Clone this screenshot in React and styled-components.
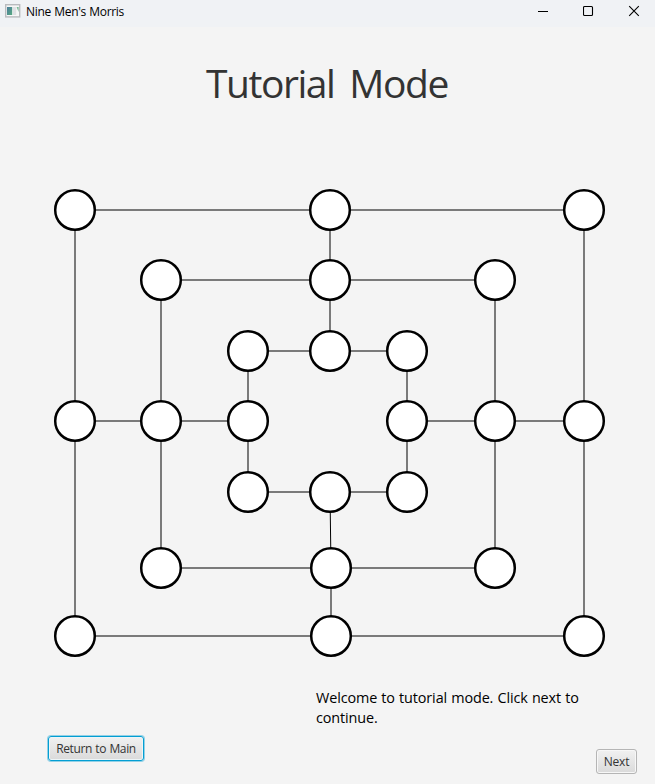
import React from "react";
import styled, { createGlobalStyle } from "styled-components";

const GlobalStyle = createGlobalStyle`
  * { box-sizing: border-box; }
  body { margin: 0; background: #f4f4f4; overflow: hidden; }
`;

const Window = styled.div`
  width: 655px;
  height: 784px;
  display: flex;
  flex-direction: column;
  background: #f4f4f4;
  font-family: "Open Sans", "Noto Sans", sans-serif;
`;

const TitleBar = styled.header`
  height: 27px;
  flex: none;
  display: flex;
  align-items: flex-start;
  background: #f0f2f5;
  color: #000;
`;

const AppIcon = styled.svg`
  flex: none;
  margin: 4px 5px 0 5px;
`;

const WindowTitle = styled.span`
  flex: 1;
  font-size: 12px;
  line-height: 16px;
  margin-top: 4px;
  letter-spacing: -0.32px;
  word-spacing: 0.6px;
`;

const WindowControls = styled.div`
  display: flex;
  gap: 34px;
  margin: 5px 15px 0 0;
`;

const Heading = styled.h1`
  margin: 28px 0 0 206px;
  height: 55px;
  line-height: 55px;
  font-size: 39px;
  font-weight: 400;
  letter-spacing: -1.45px;
  word-spacing: 6.2px;
  white-space: nowrap;
  color: #333;
`;

const Board = styled.svg`
  display: block;
  flex: none;
  margin: 70px 0 0 45px;
`;

const Link = styled.line`
  stroke: #000;
  stroke-width: 1;
`;

const Point = styled.circle`
  fill: #fff;
  stroke: #000;
  stroke-width: 2.5;
`;

const Footer = styled.footer`
  flex: 1;
  display: grid;
  grid-template-columns: 268px 280px 41px;
  padding-left: 48px;
  align-items: start;
`;

const Message = styled.p`
  margin: 22px 0 0;
  font-size: 14.4px;
  line-height: 20px;
  letter-spacing: -0.12px;
  word-spacing: 0.6px;
  white-space: nowrap;
  color: #000;
`;

const Button = styled.button`
  width: ${(p) => p.$width}px;
  height: 25px;
  margin-top: ${(p) => p.$top}px;
  padding: 1px 0 0;
  border: 1px solid ${(p) => (p.$focused ? "#039ed3" : "#b5b5b5")};
  border-radius: 3px;
  background: linear-gradient(#f1f1f1, #dadada);
  box-shadow: ${(p) =>
    p.$focused ? "0 0 0 1px #039ed366, inset 0 0 0 1px #eef5f7" : "inset 0 0 0 1px #f7f7f7"};
  font: 12px/16px "Open Sans", "Noto Sans", sans-serif;
  letter-spacing: ${(p) => p.$tracking}px;
  word-spacing: 0.5px;
  white-space: nowrap;
  color: #333;
`;

const points = [
  [75, 210], [330, 210], [584, 210],
  [161, 280], [330, 280], [495, 280],
  [248, 351], [330, 351], [407, 351],
  [75, 421], [161, 421], [248, 421],
  [407, 421], [495, 421], [584, 421],
  [248, 492], [330, 492], [407, 492],
  [161, 568], [331, 568], [495, 568],
  [75, 636], [331, 636], [584, 636],
];

const links = [
  [0, 1], [1, 2], [3, 4], [4, 5], [6, 7], [7, 8],
  [9, 10], [10, 11], [12, 13], [13, 14],
  [15, 16], [16, 17], [18, 19], [19, 20], [21, 22], [22, 23],
  [0, 9], [9, 21], [3, 10], [10, 18], [6, 11], [11, 15],
  [1, 4], [4, 7], [16, 19], [19, 22],
  [8, 12], [12, 17], [5, 13], [13, 20], [2, 14], [14, 23],
];

export default function App() {
  return (
    <Window>
      <GlobalStyle />
      <TitleBar>
        <AppIcon width="16" height="14" viewBox="0 0 16 14">
          <defs>
            <linearGradient id="pane" x1="0" y1="0" x2="1" y2="1">
              <stop offset="0" stopColor="#4b7d9b" />
              <stop offset="1" stopColor="#58a981" />
            </linearGradient>
          </defs>
          <rect x="0.7" y="0.7" width="14" height="12.2" fill="#f7f7f7" stroke="#b9bbbe" strokeWidth="1.4" />
          <rect x="2" y="3" width="5.2" height="8" fill="url(#pane)" />
          <rect x="8" y="3" width="3.2" height="8" fill="#dfe1e4" />
          <path d="M11.6 3h2v5z" fill="#78b795" />
        </AppIcon>
        <WindowTitle>Nine Men's Morris</WindowTitle>
        <WindowControls>
          <svg width="12" height="12" viewBox="0 0 12 12" shapeRendering="crispEdges">
            <path d="M1 6.5h10" stroke="#000" />
          </svg>
          <svg width="11" height="12" viewBox="0 0 11 12">
            <rect x="0.5" y="1.5" width="9" height="9" rx="1" fill="none" stroke="#000" strokeWidth="1.1" />
          </svg>
          <svg width="12" height="12" viewBox="0 0 12 12">
            <path d="M1.2 1.2l9.6 9.6M10.8 1.2L1.2 10.8" stroke="#000" strokeWidth="1.1" />
          </svg>
        </WindowControls>
      </TitleBar>

      <Heading>Tutorial Mode</Heading>

      <Board width="570" height="486" viewBox="45 180 570 486">
        {links.map(([a, b]) => (
          <Link
            key={`${a}-${b}`}
            x1={points[a][0]}
            y1={points[a][1]}
            x2={points[b][0]}
            y2={points[b][1]}
          />
        ))}
        {points.map(([x, y]) => (
          <Point key={`${x}-${y}`} cx={x} cy={y} r="19.8" />
        ))}
      </Board>

      <Footer>
        <Button $width={96} $top={70} $tracking={-0.35} $focused>Return to Main</Button>
        <Message>
          Welcome to tutorial mode. Click next to
          <br />
          continue.
        </Message>
        <Button $width={41} $top={83} $tracking={-0.2}>Next</Button>
      </Footer>
    </Window>
  );
}
